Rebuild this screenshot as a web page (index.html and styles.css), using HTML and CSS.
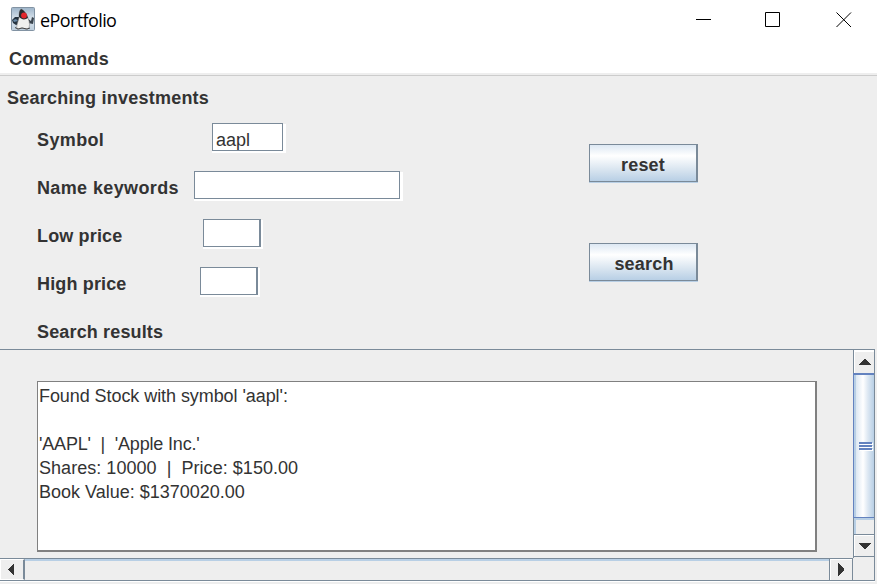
FILE: index.html
```html
<!DOCTYPE html>
<html lang="en">
<head>
<meta charset="utf-8">
<title>ePortfolio</title>
<link rel="stylesheet" href="styles.css">
</head>
<body>
<div class="window">
  <header class="titlebar">
    <svg class="duke" viewBox="0 0 24 24" width="24" height="24">
      <defs><linearGradient id="sky" x1="0" y1="0" x2="0" y2="1"><stop offset="0" stop-color="#9db4c9"/><stop offset=".5" stop-color="#d9e3ec"/><stop offset="1" stop-color="#bccddc"/></linearGradient></defs>
      <rect x=".5" y=".5" width="23" height="23" rx="1" fill="url(#sky)" stroke="#8293a3"/>
      <path d="M1 13l3-3 5 0v7l-4 1-3-2z" fill="#26333f"/>
      <path d="M2 13l3-1 2 2-4 1z" fill="#6687a5"/>
      <path d="M16 11l4 3 1-4 2 1-1 6-5-1z" fill="#39434d"/>
      <path d="M10 2c3 1 6 5 7 9 2 5 2 9 0 11-2 1-4-1-6-1s-3 2-5 1c-1-3 1-7 2-11 0-4 0-7 2-9z" fill="#f0f0ee" stroke="#777" stroke-width=".5"/>
      <path d="M10 2c3 1 6 5 7 9-3 2-6 2-9-1 0-4 0-6 2-8z" fill="#292c30"/>
      <circle cx="13" cy="8.500" r="2.900" fill="#e3262d"/>
      <path d="M4 20.500l3 1.500 4-1 5 1 3-1" fill="none" stroke="#444"/>
    </svg>
    <span class="title">ePortfolio</span>
    <svg class="controls" width="157" height="17" viewBox="0 0 157 17" fill="none" stroke="#000">
      <path d="M0 8.500h15M69.500 1.500h14v14h-14z"/>
      <path d="M140.500 1.500l14.500 14.500M155 1.500L140.500 16"/>
    </svg>
  </header>
  <nav class="menubar">Commands</nav>
  <main class="search">
    <section class="form">
      <h1>Searching investments</h1>
      <div class="row"><label class="wide">Symbol</label><span class="field symbol">aapl</span></div>
      <div class="row"><label class="wide">Name keywords</label><span class="field keywords"></span></div>
      <div class="row"><label>Low price</label><span class="field low"></span></div>
      <div class="row"><label>High price</label><span class="field high"></span></div>
      <div class="row"><label>Search results</label></div>
    </section>
    <section class="buttons">
      <button class="reset">reset</button>
      <button class="find">search</button>
    </section>
  </main>
  <section class="results">
    <div class="viewport"><pre class="output"><span class="found">Found Stock with symbol 'aapl':</span>

<span class="name">'AAPL'  |  'Apple Inc.'</span>
<span class="shares">Shares: 10000  |  Price: $150.00</span>
Book Value: $1370020.00</pre></div>
    <div class="vbar">
      <div class="arrow up"><svg width="13" height="6" shape-rendering="crispEdges"><path d="M0 6L6 0h1L13 6z"/></svg></div>
      <div class="vthumb"><i></i><i></i><i></i></div>
      <div class="vtrack"></div>
      <div class="arrow down"><svg width="13" height="6" shape-rendering="crispEdges"><path d="M0 0h13L7 6H6z"/></svg></div>
    </div>
    <div class="hbar">
      <div class="arrow left"><svg width="6" height="13" shape-rendering="crispEdges"><path d="M6 0v13L0 7V6z"/></svg></div>
      <div class="htrack"></div>
      <div class="arrow right"><svg width="6" height="13" shape-rendering="crispEdges"><path d="M0 0v13L6 7V6z"/></svg></div>
    </div>
    <div class="corner"></div>
  </section>
</div>
</body>
</html>
```

FILE: styles.css
```css
* { box-sizing: border-box; }
body { margin: 0; background: #fff; }
.window {
  width: 877px; height: 584px; overflow: hidden; background: #eee;
  font: 18px/24px "Liberation Sans", Arial, sans-serif; color: #333;
}
.titlebar { display: flex; height: 39px; background: #fff; padding: 7px 0 0 11px; }
.title { margin: 1px 0 0 5px; font: 18px/24px "Open Sans", "Noto Sans", sans-serif; color: #000; letter-spacing: -.6px; }
.controls { margin: 4px 24px 0 auto; }
.menubar { height: 37px; padding: 8px 9px 0; font-weight: bold; letter-spacing: .25px; background: linear-gradient(#fff 34px, #eee 34px 36px, #ccc 36px); }
.search { display: flex; height: 273px; }
.form { width: 589px; font-weight: bold; }
h1 { margin: 0; padding: 10px 0 0 7px; height: 40px; font-size: 18px; line-height: 24px; letter-spacing: .24px; }
.row { display: flex; height: 48px; padding: 7px 0 0 37px; }
.row label { line-height: 34px; white-space: nowrap; width: 157px; letter-spacing: .15px; }
.row .wide { letter-spacing: .37px; }
.field {
  height: 28px; border: 1px solid #7a8a99; background: #fff;
  box-shadow: 2px 1px #fff, 2px 2px #fff, 0 2px #fff; font-weight: normal; line-height: 32px; padding-left: 3px;
}
.symbol { width: 71px; margin-left: 18px; }
.keywords { width: 206px; }
.low { width: 58px; margin-left: 9px; border-right-width: 2px; }
.high { width: 58px; margin-left: 6px; border-right-width: 2px; }
.symbol, .keywords { box-shadow: 3px 1px #fff, 3px 2px #fff, 0 2px #fff; }
.buttons { display: flex; flex-direction: column; gap: 61px; padding-top: 68px; }
button {
  width: 109px; height: 38px; padding: 4px 0 0; border: 1px solid #7a8a99; border-right-width: 2px;
  background: linear-gradient(#dde8f3, #fff 30%, #dce7f1 65%, #b8cfe5);
  box-shadow: 0 1px #b8cfe5; font: bold 18px/24px "Liberation Sans", Arial, sans-serif; color: #333;
  letter-spacing: .2px;
}
.find { padding-left: 2px; }
.results {
  display: grid; grid-template: 208px 23px / 853px 22px; width: 877px; height: 235px;
  background: linear-gradient(#7a8a99, #7a8a99) 0 0 / 875px 1px no-repeat, linear-gradient(#fff, #fff) 0 232px / 875px 1px no-repeat;
  padding-top: 1px;
}
.viewport { padding: 31px 0 0 37px; }
.output {
  margin: 0; width: 780px; height: 171px; padding: 2px 1px; background: #fff;
  border: 1px solid #808080; border-right-width: 2px; border-bottom-width: 2px;
  font: 18px/24px "Liberation Sans", Arial, sans-serif;
}
.found { letter-spacing: -.07px; }
.name { letter-spacing: -.17px; }
.shares { letter-spacing: .04px; }
.arrow { display: flex; align-items: center; justify-content: center; fill: #333; }
.vbar { display: flex; flex-direction: column; border-left: 1px solid #7a8a99; border-right: 1px solid #7a8a99; }
.up { height: 23px; padding-bottom: 1px; border-top: 2px solid #fff; border-left: 1px solid #fff; }
.vthumb {
  height: 145px; margin-left: -1px; border: solid #6382bf; border-width: 2px 0 1px 1px;
  background: linear-gradient(90deg, #b8cfe5 2px, #dce7f2 2px, #fff 9px, #dce7f2 14px, #b8cfe5);
  display: flex; flex-direction: column; gap: 1px; padding: 67px 2px 0 5px;
}
.vthumb i { height: 2px; background: #6382bf; box-shadow: 1px 1px #fff; }
.vtrack { height: 16px; border: solid #b8cfe5; border-width: 2px 0 0 2px; }
.down { flex: 1; margin-bottom: 1px; border-top: 1px solid #7a8a99; border-bottom: 1px solid #7a8a99; box-shadow: inset 1px 1px #fff; }
.hbar { display: flex; border: solid #7a8a99; border-width: 1px 1px 1px 0; }
.left { width: 25px; border: 1px solid #fff; border-right: 2px solid #7a8a99; padding-right: 2px; }
.htrack { flex: 1; border-top: 2px solid #b8cfe5; }
.right { width: 23px; border-left: 1px solid #7a8a99; box-shadow: inset 1px 1px #fff; }
.corner { border: solid #7a8a99; border-width: 0 1px 1px 0; }
```
